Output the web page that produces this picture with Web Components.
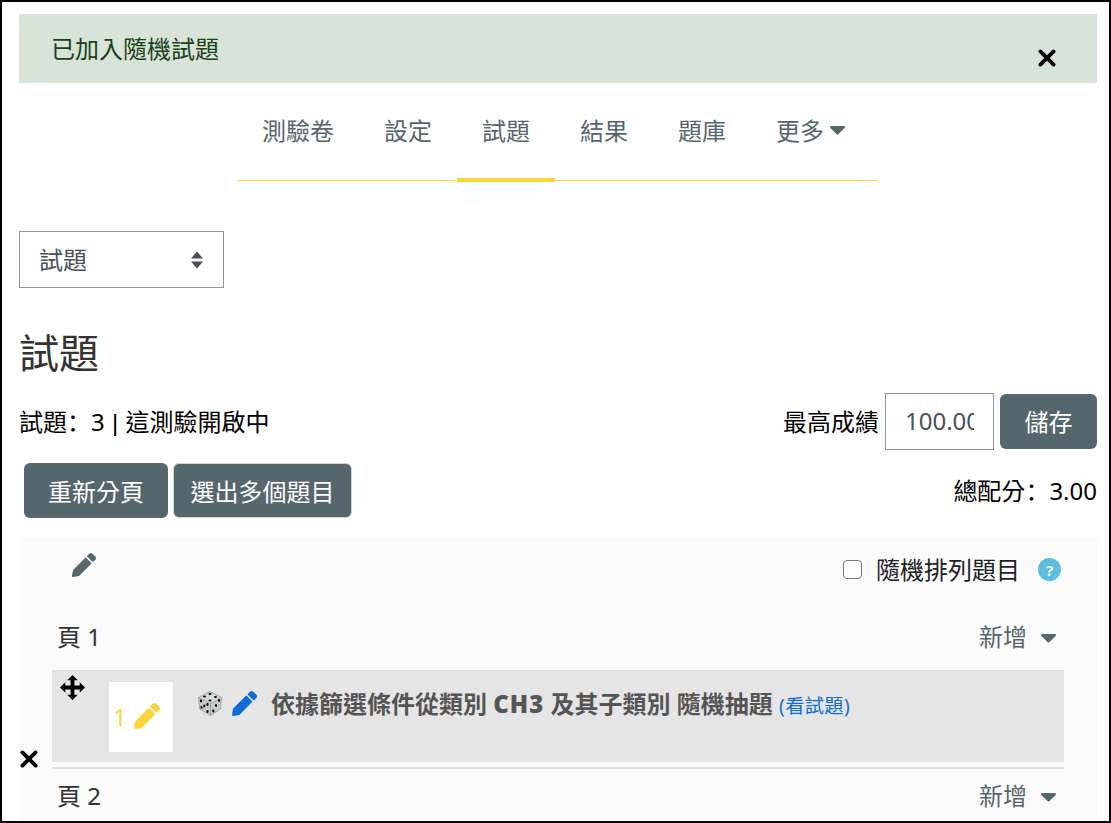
<!DOCTYPE html>
<html lang="zh-Hant"><head><meta charset="utf-8">
<style>
html,body{margin:0;padding:0;background:#fff}
body{font-family:"Noto Sans","Noto Sans CJK TC",sans-serif;font-size:24px;color:#000;overflow:hidden}
</style></head><body>
<quiz-page>
  <alert-box>已加入隨機試題</alert-box>
  <tab-nav></tab-nav>
  <fake-select>試題</fake-select>
  <page-title>試題</page-title>
  <quiz-tools></quiz-tools>
  <quiz-section></quiz-section>
</quiz-page>
<script>
const F='"Noto Sans","Noto Sans CJK TC",sans-serif';
const COLON='<span lang="zh-Hans" style="font-family:\'Noto Sans CJK SC\',sans-serif">：</span>';
const PENCIL=c=>`<svg viewBox="0 0 512 512" width="100%" height="100%" style="display:block"><path fill="${c}" d="M497.9 142.1l-46.1 46.1c-4.7 4.7-12.3 4.7-17 0l-111-111c-4.7-4.7-4.7-12.3 0-17l46.1-46.1c18.7-18.7 49.1-18.7 67.9 0l60.1 60.1c18.8 18.7 18.8 49.1 0 67.9zM284.2 99.8L21.6 362.4.4 483.9c-2.9 16.4 11.4 30.6 27.8 27.8l121.5-21.3 262.6-262.6c4.7-4.7 4.7-12.3 0-17l-111-111c-4.8-4.7-12.4-4.7-17.1 0z"/></svg>`;
const X=`<svg viewBox="0 0 18 18" width="18" height="18" style="display:block"><path d="M2.400 2.400L15.600 15.600M15.600 2.400L2.400 15.600" stroke="#000" stroke-width="3.800" stroke-linecap="round" fill="none"/></svg>`;
const CARET=`<svg viewBox="0 0 15 9" width="15" height="9" style="display:block"><path fill="#56666d" d="M1.200 0h12.600c1 0 1.500 1.200.8 1.900L8.300 8.200c-.4.400-1.200.4-1.600 0L.4 1.900C-.3 1.200.2 0 1.200 0z"/></svg>`;
const DICE=`<svg viewBox="0 0 24 25" width="24" height="25" style="display:block"><path fill="#c6cdca" d="M12 .5L23.500 6.500 22.500 18 12.500 24.500 1.700 18 .5 6.500z"/><path fill="#d6dbd8" d="M12 .5L23.500 6.500 12.500 12.700.5 6.500z"/><path fill="none" stroke="#7f8684" stroke-width=".6" d="M12 .5L23.500 6.500 22.500 18 12.500 24.500 1.700 18 .5 6.500zM.5 6.500L12.500 12.700 23.500 6.500M12.500 12.700V24.500"/><g fill="#000"><ellipse cx="12" cy="3" rx="1.500" ry="1"/><ellipse cx="6.500" cy="5.600" rx="1.500" ry="1"/><ellipse cx="17.500" cy="6" rx="1.500" ry="1"/><ellipse cx="12" cy="9.500" rx="1.500" ry="1"/><ellipse cx="3" cy="10" rx="1.100" ry="1.400"/><ellipse cx="9.500" cy="13.500" rx="1.100" ry="1.400"/><ellipse cx="6.300" cy="15" rx="1.100" ry="1.400"/><ellipse cx="3.500" cy="16.500" rx="1.100" ry="1.400"/><ellipse cx="9.500" cy="20.500" rx="1.100" ry="1.400"/><ellipse cx="21" cy="9.500" rx="1.100" ry="1.400"/><ellipse cx="18" cy="14.500" rx="1.100" ry="1.400"/><ellipse cx="15.300" cy="20" rx="1.100" ry="1.400"/></g></svg>`;
function def(name,css,html){
  customElements.define(name,class extends HTMLElement{
    constructor(){super();this.attachShadow({mode:'open'}).innerHTML=`<style>${css}</style>${html}`;}
  });
}
def('quiz-page',`:host{display:block;box-sizing:border-box;width:1111px;height:823px;border:2px solid #000;padding:12px 12px 0 17px;overflow:hidden;font-family:${F}}`,`<slot></slot>`);
def('alert-box',`:host{display:block;height:69px;background:#d8e4d7;color:#1d4020;padding-left:32px;line-height:69px;position:relative}
 .x{position:absolute;right:41px;top:35px}`,`<slot></slot><span class="x">${X}</span>`);
def('tab-nav',`:host{display:flex;justify-content:center;height:98px;box-sizing:border-box}
 nav{display:flex;width:640px;height:98px;border-bottom:1px solid #ffd633;box-sizing:border-box;align-items:stretch;justify-content:flex-start}
 a{display:flex;align-items:center;padding:0 25px 4px;color:#56666d;box-sizing:border-box;position:relative;white-space:nowrap}
 a:first-child{margin-left:-1px}
 a.on::after{content:"";position:absolute;left:0;right:0;bottom:-2px;height:4px;background:#fdd33a}
 svg{margin-left:6px;margin-top:2px}`,
 `<nav><a>測驗卷</a><a>設定</a><a class="on">試題</a><a>結果</a><a>題庫</a><a>更多${CARET}</a></nav>`);
def('fake-select',`:host{display:flex;align-items:center;justify-content:space-between;box-sizing:border-box;width:205px;height:57px;border:1.5px solid #8f959e;color:#495057;padding:0 19px 2px 19px;margin-top:50px}
 svg{margin-top:2px}`,
 `<slot></slot><svg width="14" height="20" viewBox="0 0 14 20"><path fill="#495057" d="M7 1.500l6 7H1zM7 18.500l-6-7h12z"/></svg>`);
def('page-title',`:host{display:block;font-size:40px;line-height:60px;color:#333;margin-top:35px}`,`<slot></slot>`);
def('quiz-tools',`:host{display:block;color:#000;margin-top:10px}
 .r{display:flex;justify-content:space-between;align-items:center}
 .l{display:flex;align-items:center;gap:6px}
 .lift{padding-bottom:2px}
 .in{box-sizing:border-box;width:109px;height:57px;border:1.5px solid #8f959e;color:#495057;padding:0 19px;line-height:54px}
 .in span{display:block;width:69px;overflow:hidden;white-space:nowrap}
 .b{display:inline-flex;align-items:center;justify-content:center;box-sizing:border-box;background:#56666d;color:#fff;border-radius:6px;height:55px;}
 .r2{margin-top:13px;align-items:flex-start}
 .t{padding-top:9px}
 .bar{font-family:"Liberation Sans",sans-serif;padding:0 1px}`,
 `<div class="r"><span class="lift">試題${COLON}3 <span class="bar">|</span> 這測驗開啟中</span><span class="l"><span class="lift">最高成績</span><span class="in"><span>100.00</span></span><span class="b lift" style="width:97px">儲存</span></span></div>
 <div class="r r2"><span class="l" style="gap:5px;padding-left:5px"><span class="b" style="width:144px">重新分頁</span><span class="b" style="width:179px;border:1px solid #ced4da">選出多個題目</span></span><span class="t">總配分${COLON}3.00</span></div>`);
def('quiz-section',`:host{display:block;background:#fafafa;margin-top:19px;height:284px;position:relative;color:#333}
 .top{display:flex;justify-content:space-between;align-items:center;height:62px;padding:0 36px 0 53px}
 .pen{width:24px;height:24px;margin-bottom:6px}
 .sh{display:flex;align-items:center;color:#1d2125}
 .cb{width:19px;height:19px;border:1.5px solid #777;border-radius:4px;box-sizing:border-box;margin-right:14px;margin-top:3px;background:#fff}
 .q{width:23px;height:23px;border-radius:50%;background:#5bc0de;color:#fff;font:700 15px "Noto Sans",sans-serif;display:flex;align-items:center;justify-content:center;margin-left:18px;margin-top:3px}
 .pg{display:flex;justify-content:space-between;align-items:center;padding:2px 41px 0 38px;height:71px;box-sizing:border-box}
 .add{display:flex;align-items:center;color:#56666d}
 .add svg{margin-left:14px;margin-top:6px}
 .row{box-sizing:border-box;margin:0 33px;height:92px;background:#e5e5e5;border-top:1px solid #dee2e6;display:flex;position:relative}
 .mv{position:absolute;left:8px;top:3px;width:25px;height:25px}
 .num{position:absolute;left:57px;top:11px;width:64px;height:70px;background:#fff;color:#fdd33a;display:flex;align-items:center;padding-left:4px;box-sizing:border-box;padding-bottom:2px}
 .num i{display:block;width:26px;height:26px;margin-left:7px}
 .dice{position:absolute;left:146px;top:20px}
 .bp{position:absolute;left:180px;top:20px;width:25px;height:25px}
 .tt{position:absolute;left:219px;top:15px;font-weight:700;color:#555;white-space:nowrap;line-height:36px}
 .tt b{letter-spacing:1px}
 .tt a{font-weight:400;font-size:19.2px;color:#0f6fd0;letter-spacing:.4px}
 .del{position:absolute;left:1px;top:213px}
 hr{margin:5px 33px 0;border:0;border-top:2px solid #e3e3e3;height:0}
 .p2{height:48px}`,
 `<div class="top"><span class="pen">${PENCIL('#56666d')}</span><span class="sh"><span class="cb"></span>隨機排列題目<span class="q">?</span></span></div>
 <div class="pg"><span>頁 1</span><span class="add">新增${CARET}</span></div>
 <div class="row"><span class="mv"><svg viewBox="0 0 26 26" width="25" height="25"><path fill="#000" d="M13 0l5.500 5.500H15V11h5.500V7.500L26 13l-5.500 5.500V15H15v5.500h3.500L13 26l-5.500-5.500H11V15H5.500v3.500L0 13l5.500-5.500V11H11V5.500H7.500z"/></svg></span>
 <span class="num">1<i>${PENCIL('#fdd33a')}</i></span>
 <span class="dice">${DICE}</span>
 <span class="bp">${PENCIL('#0f6cd5')}</span>
 <span class="tt">依據篩選條件從類別 <b>CH3</b> 及其子類別 隨機抽題 <a>(看試題)</a></span></div>
 <hr><span class="del">${X}</span>
 <div class="pg p2"><span>頁 2</span><span class="add">新增${CARET}</span></div>`);
</script>
</body></html>
